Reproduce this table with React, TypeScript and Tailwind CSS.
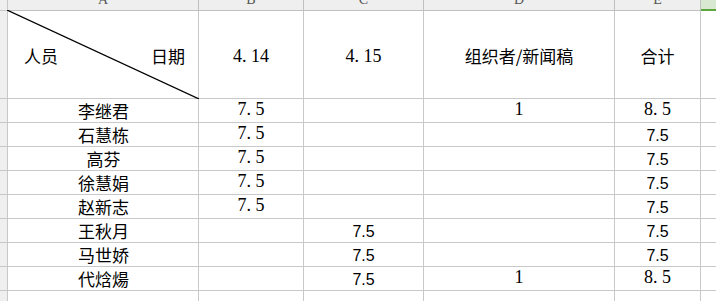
const line = "border-[#c8c8c8]";
const cjk = "font-['Noto_Sans_CJK_SC',sans-serif] text-[17px] leading-none text-black";
const serif = "font-['Liberation_Serif',serif] text-[18px] leading-none text-black";
const sans = "font-['Liberation_Sans',sans-serif] text-[16px] leading-none text-black";

type Val = { v: string; kind: "serif" | "sans" } | null;

const rows: { name: string; b: Val; c: Val; d: Val; e: Val }[] = [
  { name: "李继君", b: { v: "7.5", kind: "serif" }, c: null, d: { v: "1", kind: "serif" }, e: { v: "8.5", kind: "serif" } },
  { name: "石慧栋", b: { v: "7.5", kind: "serif" }, c: null, d: null, e: { v: "7.5", kind: "sans" } },
  { name: "高芬", b: { v: "7.5", kind: "serif" }, c: null, d: null, e: { v: "7.5", kind: "sans" } },
  { name: "徐慧娟", b: { v: "7.5", kind: "serif" }, c: null, d: null, e: { v: "7.5", kind: "sans" } },
  { name: "赵新志", b: { v: "7.5", kind: "serif" }, c: null, d: null, e: { v: "7.5", kind: "sans" } },
  { name: "王秋月", b: null, c: { v: "7.5", kind: "sans" }, d: null, e: { v: "7.5", kind: "sans" } },
  { name: "马世娇", b: null, c: { v: "7.5", kind: "sans" }, d: null, e: { v: "7.5", kind: "sans" } },
  { name: "代焓煬", b: null, c: { v: "7.5", kind: "sans" }, d: { v: "1", kind: "serif" }, e: { v: "8.5", kind: "serif" } },
];

// SimSun-style number: the dot takes a full half-width cell
function SerifNum({ v }: { v: string }) {
  const [a, b] = v.split(".");
  if (b === undefined) return <span className={serif}>{a}</span>;
  return (
    <span className={serif}>
      {a}
      <span className="inline-block w-[9px]">.</span>
      {b}
    </span>
  );
}

function Cell({ val }: { val: Val }) {
  return (
    <div className={`flex items-end justify-center border-r border-b ${line} bg-white`}>
      {val ? (
        val.kind === "serif" ? (
          <span className="pb-[1px]">
            <SerifNum v={val.v} />
          </span>
        ) : (
          <span className={`${sans} pb-[2px]`}>{val.v}</span>
        )
      ) : null}
    </div>
  );
}

function Gutter() {
  return <div className={`border-r border-b ${line} bg-[#efefef]`} />;
}

export default function App() {
  const letters = ["A", "B", "C", "D", "E"];
  return (
    <div className="h-[301px] w-[716px] overflow-hidden bg-white">
      <div className="grid grid-cols-[8px_191px_105px_120px_191px_86px_1fr] grid-rows-[11px_88px_repeat(8,24px)_24px]">
        {/* column letters, scrolled so only their bottom shows */}
        <div className={`border-r border-b ${line} bg-[#efefef]`} />
        {letters.map((l) => (
          <div
            key={l}
            className="flex items-end justify-center overflow-hidden border-r border-b border-[#c0c0c0] bg-[#efefef]"
          >
            <span className="mb-[3px] font-['Liberation_Serif',serif] text-[14px] leading-none text-[#555]">{l}</span>
          </div>
        ))}
        <div className="border-b-2 border-[#5ca63d] bg-[#d9e9d1]" />

        {/* header row */}
        <Gutter />
        <div className={`relative flex items-center justify-between border-r border-b ${line} bg-white pl-[16px] pr-[13px] pt-[2px]`}>
          <svg className="absolute -top-px -left-px h-[calc(100%+2px)] w-[calc(100%+2px)]" preserveAspectRatio="none" viewBox="0 0 192 89">
            <line x1="0" y1="0" x2="192" y2="89" stroke="#000" strokeWidth="1.2" />
          </svg>
          <span className={cjk}>人员</span>
          <span className={cjk}>日期</span>
        </div>
        <div className={`flex items-center justify-center border-r border-b ${line} bg-white pt-[3px]`}>
          <SerifNum v="4.14" />
        </div>
        <div className={`flex items-center justify-center border-r border-b ${line} bg-white pt-[3px]`}>
          <SerifNum v="4.15" />
        </div>
        <div className={`flex items-center justify-center border-r border-b ${line} bg-white pt-[2px]`}>
          <span className={cjk}>组织者/新闻稿</span>
        </div>
        <div className={`flex items-center justify-center border-r border-b ${line} bg-white pt-[2px]`}>
          <span className={cjk}>合计</span>
        </div>
        <div className={`border-b ${line} bg-white`} />

        {rows.map((r) => (
          <div key={r.name} className="contents">
            <Gutter />
            <div className={`flex items-end justify-center border-r border-b ${line} bg-white pl-px`}>
              <span className={`${cjk} pb-[3px]`}>{r.name}</span>
            </div>
            <Cell val={r.b} />
            <Cell val={r.c} />
            <Cell val={r.d} />
            <Cell val={r.e} />
            <div className={`border-b ${line} bg-white`} />
          </div>
        ))}

        {/* partial last row */}
        <Gutter />
        <div className={`border-r border-b ${line}`} />
        <div className={`border-r border-b ${line}`} />
        <div className={`border-r border-b ${line}`} />
        <div className={`border-r border-b ${line}`} />
        <div className={`border-r border-b ${line}`} />
        <div className={`border-b ${line}`} />
      </div>
    </div>
  );
}
